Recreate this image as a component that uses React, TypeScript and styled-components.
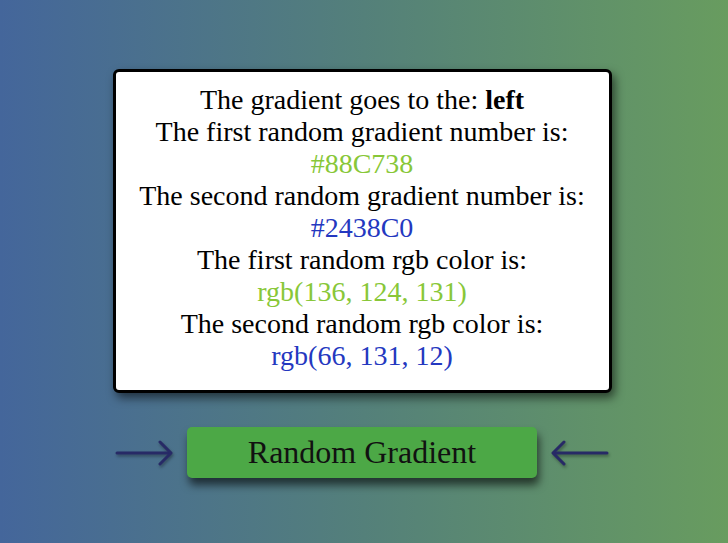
import React from "react";
import styled, { createGlobalStyle } from "styled-components";

const GlobalStyle = createGlobalStyle`
  html, body { margin: 0; padding: 0; }
  body {
    height: 543px;
    overflow: hidden;
    background: linear-gradient(to right, #44669b, #54807a 50%, #689c5f);
    font-family: "Liberation Serif", "Times New Roman", serif;
  }
`;

const Page = styled.div`
  height: 543px;
  display: flex;
  flex-direction: column;
  align-items: center;
  padding: 69px 4px 0 0;
  box-sizing: border-box;
`;

const Card = styled.div`
  width: 499px;
  box-sizing: border-box;
  background: #fff;
  border: 3px solid #000;
  border-radius: 6px;
  box-shadow: 3px 5px 10px rgba(0, 0, 0, 0.55);
  padding: 12px 6px 18px;
  display: flex;
  flex-direction: column;
  align-items: center;
  text-align: center;
`;

const Line = styled.div<{ $color?: string }>`
  font-size: 28px;
  line-height: 32px;
  white-space: nowrap;
  color: ${(p) => p.$color ?? "#000"};
`;

const Row = styled.div`
  margin-top: 34px;
  display: flex;
  align-items: center;
  gap: 14px;
`;

const Button = styled.button`
  width: 350px;
  height: 51px;
  background: #4ca846;
  border: none;
  border-radius: 5px;
  box-shadow: 2px 7px 9px rgba(0, 0, 0, 0.6);
  font-family: "Liberation Serif", "Times New Roman", serif;
  font-size: 32px;
  color: #111;
  padding: 0;
  cursor: pointer;
`;

const ArrowSvg = styled.svg`
  width: 58px;
  height: 30px;
  filter: drop-shadow(1px 2px 1.5px rgba(0, 0, 0, 0.35));
`;

const Arrow: React.FC<{ dir: "right" | "left" }> = ({ dir }) => (
  <ArrowSvg viewBox="0 0 58 30">
    {dir === "right" ? (
      <g stroke="#272a66" strokeWidth="3" fill="none" strokeLinecap="round" strokeLinejoin="round">
        <line x1="2" y1="15" x2="55" y2="15" />
        <polyline points="45,4 56,15 45,26" />
      </g>
    ) : (
      <g stroke="#272a66" strokeWidth="3" fill="none" strokeLinecap="round" strokeLinejoin="round">
        <line x1="3" y1="15" x2="56" y2="15" />
        <polyline points="13,4 2,15 13,26" />
      </g>
    )}
  </ArrowSvg>
);

export default function App() {
  return (
    <>
      <GlobalStyle />
      <Page>
        <Card>
          <Line>
            The gradient goes to the: <b>left</b>
          </Line>
          <Line>The first random gradient number is:</Line>
          <Line $color="#88c738">#88C738</Line>
          <Line>The second random gradient number is:</Line>
          <Line $color="#2438c0">#2438C0</Line>
          <Line>The first random rgb color is:</Line>
          <Line $color="#88c738">rgb(136, 124, 131)</Line>
          <Line>The second random rgb color is:</Line>
          <Line $color="#2438c0">rgb(66, 131, 12)</Line>
        </Card>
        <Row>
          <Arrow dir="right" />
          <Button>Random Gradient</Button>
          <Arrow dir="left" />
        </Row>
      </Page>
    </>
  );
}
